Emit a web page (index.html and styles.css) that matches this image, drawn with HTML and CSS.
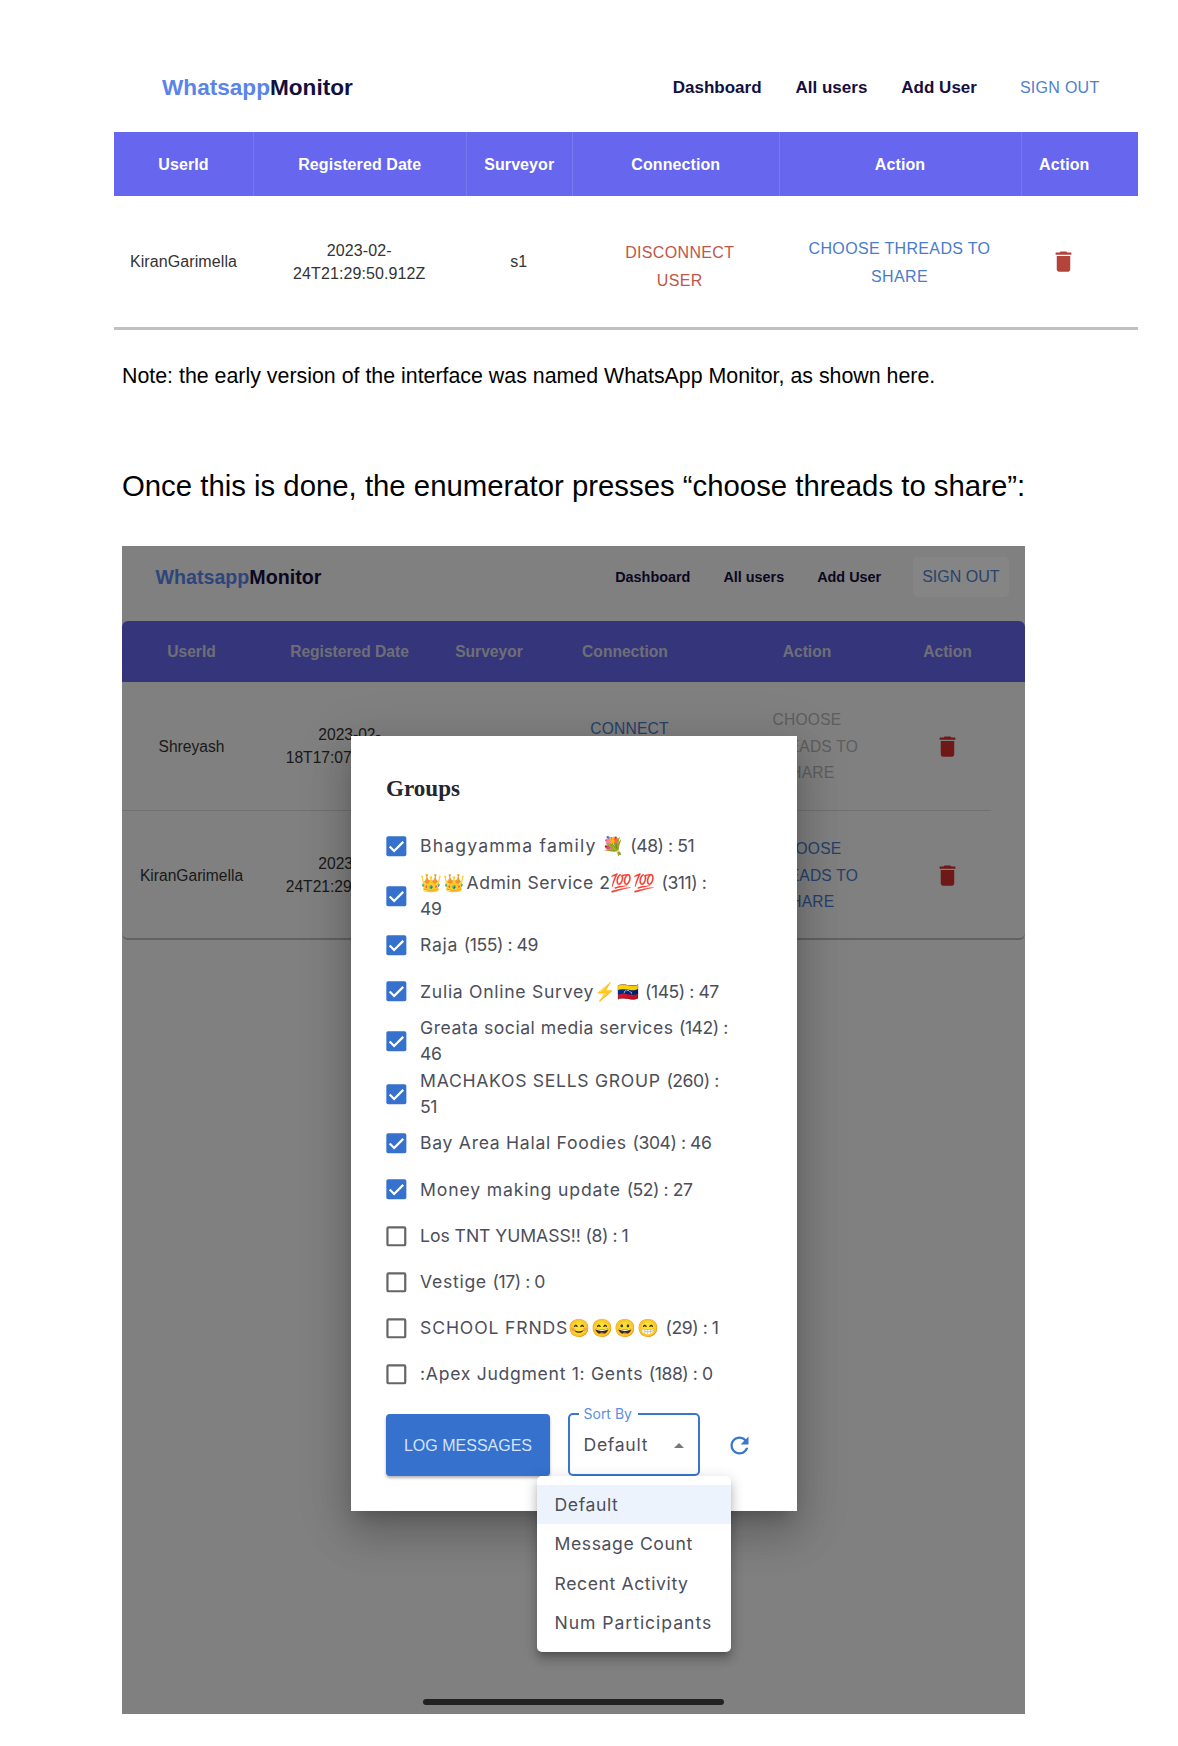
FILE: index.html
```
<!DOCTYPE html>
<html lang="en">
<head>
<meta charset="utf-8">
<title>WhatsappMonitor</title>
<link rel="stylesheet" href="styles.css">
</head>
<body>
<svg class="defs" aria-hidden="true">
  <symbol id="trash" viewBox="0 0 24 24"><path d="M6 19c0 1.1.9 2 2 2h8c1.1 0 2-.9 2-2V7H6v12zM19 4h-3.5l-1-1h-5l-1 1H5v2h14V4z"/></symbol>
  <symbol id="on" viewBox="0 0 24 24"><rect x="3" y="3" width="18" height="18" rx="1.6" fill="#3571cd"/><path d="M6 12.2l4 4 8.2-8.2" fill="none" stroke="#fff" stroke-width="2"/></symbol>
  <symbol id="off" viewBox="0 0 24 24"><rect x="4" y="4" width="16" height="16" rx="1" fill="none" stroke="#666" stroke-width="2"/></symbol>
</svg>

<section class="figure">
  <header class="nav">
    <div class="logo"><span>Whatsapp</span>Monitor</div>
    <nav class="links"><a>Dashboard</a><a>All users</a><a>Add User</a><a class="signout">SIGN OUT</a></nav>
  </header>
  <div class="grid head"><div>UserId</div><div>Registered Date</div><div>Surveyor</div><div>Connection</div><div>Action</div><div>Action</div></div>
  <div class="grid row">
    <div>KiranGarimella</div>
    <div>2023-02-<br>24T21:29:50.912Z</div>
    <div>s1</div>
    <div class="btn danger">DISCONNECT<br>USER</div>
    <div class="btn">CHOOSE THREADS TO<br>SHARE</div>
    <div><svg class="trash"><use href="#trash"/></svg></div>
  </div>
</section>

<p class="note">Note: the early version of the interface was named WhatsApp Monitor, as shown here.</p>
<p class="lead">Once this is done, the enumerator presses “choose threads to share”:</p>

<section class="panel">
  <header class="nav">
    <div class="logo"><span>Whatsapp</span>Monitor</div>
    <nav class="links"><a>Dashboard</a><a>All users</a><a>Add User</a><a class="signout">SIGN OUT</a></nav>
  </header>
  <div class="card">
    <div class="grid head"><div>UserId</div><div>Registered Date</div><div>Surveyor</div><div>Connection</div><div>Action</div><div>Action</div></div>
    <div class="grid row">
      <div>Shreyash</div>
      <div>2023-02-<br>18T17:07:00.000Z</div>
      <div></div>
      <div class="btn connect">CONNECT</div>
      <div class="btn disabled">CHOOSE<br>THREADS TO<br>SHARE</div>
      <div><svg class="trash"><use href="#trash"/></svg></div>
    </div>
    <div class="grid row">
      <div>KiranGarimella</div>
      <div>2023-02-<br>24T21:29:50.912Z</div>
      <div></div>
      <div></div>
      <div class="btn">CHOOSE<br>THREADS TO<br>SHARE</div>
      <div><svg class="trash"><use href="#trash"/></svg></div>
    </div>
  </div>
  <div class="backdrop"></div>

  <div class="modal">
    <h2>Groups</h2>
    <ul class="groups">
      <li><svg><use href="#on"/></svg><div><span class="open">Bhagyamma family </span><i>💐</i><b> (48) : 51</b></div></li>
      <li class="two"><svg><use href="#on"/></svg><div><i>👑👑</i><span class="snug">Admin Service 2</span><i>💯💯</i><b> (311) :<br>49</b></div></li>
      <li><svg><use href="#on"/></svg><div>Raja <b>(155) : 49</b></div></li>
      <li><svg><use href="#on"/></svg><div>Zulia Online Survey<i>⚡🇻🇪</i><b> (145) : 47</b></div></li>
      <li class="two"><svg><use href="#on"/></svg><div><span class="snug">Greata social media services </span><b>(142) :<br>46</b></div></li>
      <li class="two"><svg><use href="#on"/></svg><div>MACHAKOS SELLS GROUP <b>(260) :<br>51</b></div></li>
      <li><svg><use href="#on"/></svg><div>Bay Area Halal Foodies <b>(304) : 46</b></div></li>
      <li><svg><use href="#on"/></svg><div><span class="wide">Money making update </span><b>(52) : 27</b></div></li>
      <li><svg><use href="#off"/></svg><div><span class="tight">Los TNT YUMASS!! </span><b>(8) : 1</b></div></li>
      <li><svg><use href="#off"/></svg><div>Vestige <b>(17) : 0</b></div></li>
      <li><svg><use href="#off"/></svg><div><span class="wide">SCHOOL FRNDS</span><i>😊😄😀😁</i><b> (29) : 1</b></div></li>
      <li><svg><use href="#off"/></svg><div>:Apex Judgment 1: Gents <b>(188) : 0</b></div></li>
    </ul>
    <div class="actions">
      <button class="log">LOG MESSAGES</button>
      <div class="select"><span class="label">Sort By</span><span>Default</span><span class="arrow"></span></div>
      <svg class="refresh" viewBox="0 0 24 24"><path d="M17.65 6.35C16.2 4.9 14.21 4 12 4c-4.42 0-7.99 3.58-7.99 8s3.57 8 7.99 8c3.73 0 6.84-2.55 7.73-6h-2.08c-.82 2.33-3.04 4-5.65 4-3.31 0-6-2.69-6-6s2.69-6 6-6c1.66 0 3.14.69 4.22 1.78L13 11h7V4l-2.35 2.35z"/></svg>
    </div>
    <ul class="menu"><li class="selected">Default</li><li>Message Count</li><li>Recent Activity</li><li class="last">Num Participants</li></ul>
  </div>
  <div class="homebar"></div>
</section>
</body>
</html>
```
FILE: styles.css
```
* { box-sizing: border-box; }
body {
  margin: 0;
  height: 1746px;
  display: flex;
  flex-direction: column;
  align-items: flex-start;
  background: #fff;
  font-family: "Liberation Sans", Arial, sans-serif;
  overflow: hidden;
}
p, h2, ul { margin: 0; padding: 0; }
ul { list-style: none; }
svg { display: block; }
.defs { position: absolute; width: 0; height: 0; }

/* shared header and table */
.nav { display: flex; justify-content: space-between; align-items: center; }
.logo { font-weight: bold; color: #130f40; }
.logo span { color: #5a84ea; }
.links { display: flex; align-items: center; }
.links a { font-weight: bold; color: #130f40; }
.links .signout { font-weight: normal; color: #4f80cc; }
.grid { display: grid; }
.grid > div { display: flex; align-items: center; justify-content: center; text-align: center; }
.head { background: #6666ee; color: #fff; font-weight: bold; }
.row { color: #333; }
.btn { color: #4a7bcb; }
.trash { width: 27px; height: 27px; fill: #b3443c; }

/* first figure */
.figure { width: 1024px; margin-left: 114px; }
.figure .nav { height: 132px; padding: 43px 38.5px 0 48px; }
.figure .logo { font-size: 22.6px; }
.figure .links { gap: 34px; font-size: 17px; }
.figure .signout { font-size: 16px; letter-spacing: .28px; margin-left: 9px; }
.figure .grid { grid-template-columns: 139px 212.5px 106.5px 206.5px 242px 1fr; font-size: 16px; }
.figure .head { height: 64px; letter-spacing: .08px; }
.figure .head > div { padding-top: 2px; }
.figure .head > div + div { border-left: 1px solid #7878f0; }
.figure .grid > div:last-child { padding-right: 31px; }
.figure .row { height: 134px; line-height: 22.4px; border-bottom: 3px solid #c0c0c0; letter-spacing: .1px; }
.figure .row > div { padding-top: 2px; }
.figure .row > div:last-child { padding-top: 0; }
.figure .btn { line-height: 27.5px; letter-spacing: .34px; }
.figure .row > .danger { color: #c0554a; padding: 10px 0 0 9px; }

.note { margin: 31px 0 0 122px; font-size: 21.36px; line-height: 30px; white-space: nowrap; color: #000; }
.lead { margin: 75px 0 0 122px; font-size: 29.33px; line-height: 40px; white-space: nowrap; color: #000; }

/* app window with the open dialog */
.panel { position: relative; width: 903px; height: 1168px; margin: 40px 0 0 122px; background: #f6f6f6; overflow: hidden; }
.panel .nav { height: 75px; padding: 0 16.5px 13px 33.5px; }
.panel .logo { font-size: 19.65px; }
.panel .links { gap: 33px; font-size: 14.4px; }
.panel .signout { margin-left: -1px; padding: 0 9px; line-height: 40px; border-radius: 5px; background: #fff; font-size: 16px; }
.panel .card { border-radius: 6px; overflow: hidden; height: 319px; border-bottom: 2px solid #bbb; }
.panel .grid { grid-template-columns: 139px 177px 102px 170px 194px 87px; font-size: 15.6px; }
.panel .head { height: 61px; color: #d4d4e0; }
.panel .head > div { padding-top: 1px; }
.panel .row { height: 128.5px; line-height: 22.4px; }
.panel .row > div { border-bottom: 1px solid #d8d8d8; padding-top: 2px; }
.panel .row:last-child > div { border: 0; }
.panel .btn { line-height: 26.5px; letter-spacing: .2px; }
.panel .row > .connect { padding: 0 0 33px 9px; }
.panel .disabled { color: #b4b4b4; }
.panel .trash { fill: #d32f2f; }
.backdrop { position: absolute; inset: 0; background: rgba(0, 0, 0, .48); }
.homebar { position: absolute; left: 301px; top: 1153px; width: 301px; height: 6px; border-radius: 3px; background: #222; }

.modal {
  position: absolute;
  left: 228.5px;
  top: 189.5px;
  width: 446px;
  height: 775.5px;
  padding: 0 35.5px;
  background: #fff;
  color: #4c4e5a;
  font: 17.6px/26.4px Inter, "Noto Color Emoji", sans-serif;
  box-shadow: 0 11px 15px -7px rgba(0,0,0,.2), 0 24px 38px 3px rgba(0,0,0,.14), 0 9px 46px 8px rgba(0,0,0,.12);
}
.modal h2 { height: 88px; padding: 36px 0 20px; font: bold 23.1px/32px "Liberation Serif", serif; color: #24262e; }
.groups li { display: flex; align-items: center; gap: 10.2px; height: 46.2px; white-space: nowrap; letter-spacing: .7px; }
.groups li.two { height: 52.8px; }
.groups svg { width: 26.7px; height: 26.7px; margin-left: -2.8px; flex: none; }
.groups b { font-weight: normal; letter-spacing: -.45px; }
.groups i { font-style: normal; letter-spacing: 1.3px; }
.groups .open { letter-spacing: 1.15px; }
.groups .wide { letter-spacing: .85px; }
.groups .snug { letter-spacing: .5px; }
.groups .tight { letter-spacing: -.05px; }

.actions { display: flex; align-items: center; margin-top: 16px; height: 62.5px; }
.log { width: 164px; height: 62px; border: 0; border-radius: 4px; padding: 2px 0 0; background: #3571cd; color: #d3e4fb; font: 16px "Liberation Sans", sans-serif; box-shadow: 0 2px 3px rgba(0,0,0,.3); }
.select { position: relative; width: 132.5px; height: 63px; margin-left: 17.5px; padding: 1px 14px 0; border: 2px solid #3876d0; border-radius: 5px; display: flex; align-items: center; justify-content: space-between; letter-spacing: .7px; }
.label { position: absolute; left: 9px; top: -11px; padding: 0 6px 0 5px; background: #fff; color: #5c8fdf; font-size: 14px; line-height: 20px; letter-spacing: 0; }
.arrow { border: 5.5px solid transparent; border-top: 0; border-bottom: 5.5px solid #777; }
.refresh { width: 27px; height: 27px; margin: 1px 0 0 26px; fill: #3876d0; }

.menu { position: absolute; left: 186px; top: 740.5px; width: 194px; height: 176px; padding: 8.5px 0; border-radius: 5px; background: #fff; box-shadow: 0 5px 5px -3px rgba(0,0,0,.2), 0 8px 10px 1px rgba(0,0,0,.14), 0 3px 14px 2px rgba(0,0,0,.12); }
.menu li { padding-left: 18px; line-height: 39.6px; letter-spacing: .6px; }
.menu .last { letter-spacing: .95px; }
.menu .selected { background: #edf3fc; }
```
